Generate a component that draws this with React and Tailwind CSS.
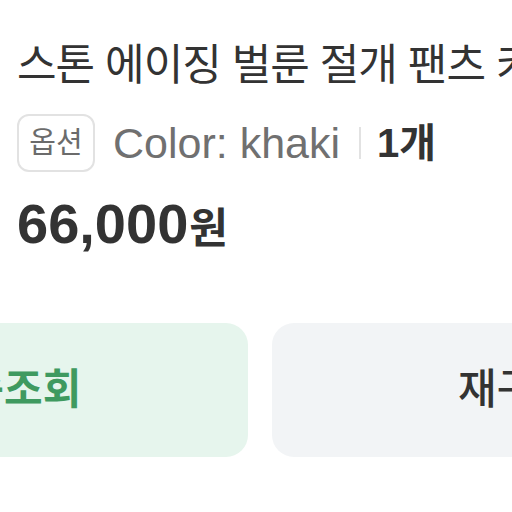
import React from 'react';

const font = { fontFamily: '"Liberation Sans", "Noto Sans CJK KR", sans-serif' };

export default function App() {
    return (
        <div className="w-[512px] h-[512px] overflow-hidden bg-white" style={font}>
            {/* 상품 정보 */}
            <div className="pl-[17px] pt-[35px]">
                <h1 className="text-[43px] leading-[60px] font-normal text-[#333333] whitespace-nowrap tracking-[-1px]">
                    스톤 에이징 벌룬 절개 팬츠 카키
                </h1>

                <div className="mt-[16px] flex items-center whitespace-nowrap">
                    <span className="h-[58px] w-[78px] flex items-center justify-center rounded-[12px] border-2 border-[#e2e2e2] text-[29px] text-[#6b6b6b]">
                        옵션
                    </span>
                    <span className="ml-[18px] text-[43px] text-[#707070]">Color: khaki</span>
                    <span className="ml-[19px] mr-[16px] h-[32px] w-[2px] bg-[#e2e2e2]"></span>
                    <span className="text-[40px] font-semibold text-[#333333]">1개</span>
                </div>

                <p className="mt-[18px] leading-[60px] font-bold text-[#333333] whitespace-nowrap">
                    <span className="text-[56px]">66,000</span>
                    <span className="ml-[1px] text-[42px]">원</span>
                </p>
            </div>

            {/* 버튼 */}
            <div className="mt-[55px] ml-[-240px] flex gap-[24px]">
                <button className="w-[488px] h-[134px] shrink-0 rounded-[22px] bg-[#e6f5ed] text-[42px] font-bold text-[#3f9a60] flex items-center justify-center">
                    배송조회
                </button>
                <button className="w-[488px] h-[134px] shrink-0 rounded-[22px] bg-[#f2f4f6] text-[42px] font-medium text-[#333333] flex items-center justify-center">
                    재구매
                </button>
            </div>
        </div>
    );
}
